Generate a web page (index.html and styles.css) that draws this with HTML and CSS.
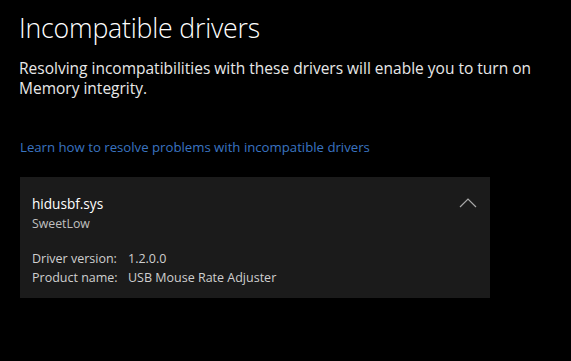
FILE: index.html
```html
<!DOCTYPE html>
<html>
<head>
<meta charset="utf-8">
<link rel="stylesheet" href="styles.css">
</head>
<body>
<main class="page">
  <h1 class="title">Incompatible drivers</h1>
  <p class="desc">Resolving incompatibilities with these drivers will enable you to turn on Memory integrity.</p>
  <a class="link" href="#">Learn how to resolve problems with incompatible drivers</a>
  <section class="card">
    <div class="card-head">
      <div>
        <div class="name">hidusbf.sys</div>
        <div class="vendor">SweetLow</div>
      </div>
      <svg class="chev" width="18" height="10" viewBox="0 0 18 10"><path d="M1 9 L9 1 L17 9" fill="none" stroke="#a8a8a8" stroke-width="1.2"/></svg>
    </div>
    <div class="props">
      <span class="k">Driver version:</span><span class="v">1.2.0.0</span>
      <span class="k">Product name:</span><span class="v">USB Mouse Rate Adjuster</span>
    </div>
  </section>
</main>
</body>
</html>
```
FILE: styles.css
```css
html, body {
  margin: 0;
  background: #000;
  height: 100%;
}
.page {
  font-family: "Open Sans", "Noto Sans", sans-serif;
  color: #fff;
  padding: 9px 0 0 19px;
  width: 552px;
}
.title {
  margin: 0;
  font-weight: 300;
  font-size: 26.7px;
  line-height: 38px;
  letter-spacing: -0.2px;
}
.desc {
  margin: 11px 0 0 0;
  font-size: 15.5px;
  line-height: 20px;
  color: #e8e8e8;
  width: 530px;
}
.link {
  display: block;
  margin: 39px 0 0 1px;
  font-size: 13.2px;
  line-height: 20px;
  color: #3a74c0;
  text-decoration: none;
}
.card {
  margin: 20px 0 0 1px;
  width: 470px;
  height: 121px;
  background: #1b1b1b;
  box-sizing: border-box;
  padding: 16px 12px 0 12px;
}
.card-head {
  display: flex;
  justify-content: space-between;
  align-items: flex-start;
}
.chev {
  margin: 5px 1px 0 0;
}
.name {
  font-size: 13.6px;
  line-height: 21px;
  color: #fff;
}
.vendor {
  font-size: 12.3px;
  line-height: 20px;
  color: #c0c0c0;
}
.props {
  margin-top: 15px;
  display: grid;
  grid-template-columns: 96px auto;
  font-size: 12.5px;
  line-height: 19px;
  color: #cfcfcf;
}
```
